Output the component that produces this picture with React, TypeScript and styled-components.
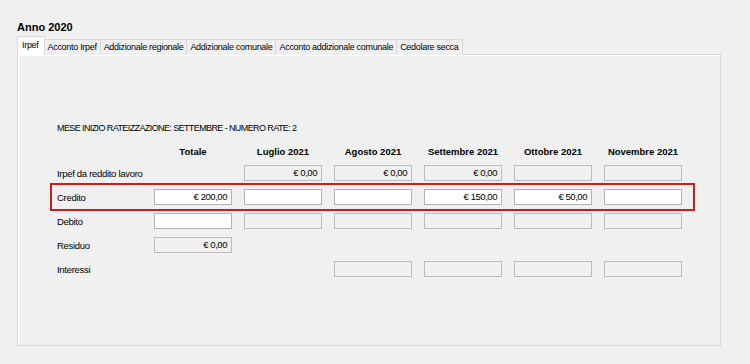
import styled, { createGlobalStyle } from 'styled-components';

const GlobalStyle = createGlobalStyle`
    html, body {
        margin: 0;
        padding: 0;
        background: #f0f0f0;
    }
    body {
        font-family: "Liberation Sans", Arial, sans-serif;
        font-size: 11px;
        color: #000;
    }
`;

const Page = styled.div`
    width: 750px;
    height: 364px;
    padding: 20px 0 0 17px;
    box-sizing: border-box;
`;

const Title = styled.div`
    font-weight: bold;
    font-size: 11px;
    height: 17px;
    line-height: 14px;
`;

const TabBar = styled.div`
    display: flex;
    align-items: flex-end;
    height: 18px;
`;

const Tab = styled.div<{ $active?: boolean }>`
    height: ${p => (p.$active ? '18px' : '15px')};
    line-height: ${p => (p.$active ? '16px' : '14px')};
    padding: 0 ${p => (p.$active ? '5px' : '3px')} 0 ${p => (p.$active ? '4px' : '3px')};
    background: ${p => (p.$active ? '#ffffff' : '#f0f0f0')};
    border: 1px solid #d9d9d9;
    border-bottom: none;
    margin-left: -1px;
    font-size: 9px;
    letter-spacing: -0.3px;
    white-space: nowrap;
    &:first-child {
        margin-left: 0;
    }
    position: relative;
    z-index: ${p => (p.$active ? 2 : 1)};
`;

const Panel = styled.div`
    width: 704px;
    height: 292px;
    box-sizing: border-box;
    border: 1px solid #d9d9d9;
    box-shadow: inset 0 1px 0 #ffffff, inset 1px 0 0 #ffffff;
    margin-top: -1px;
    padding: 68px 0 0 39px;
    position: relative;
`;

const Info = styled.div`
    font-size: 9px;
    height: 20px;
    letter-spacing: -0.6px;
`;

const Row = styled.div<{ $highlight?: boolean }>`
    display: grid;
    grid-template-columns: 85px repeat(6, 78px);
    column-gap: 12px;
    align-items: center;
    height: 16px;
    margin-bottom: 8px;
    ${p =>
        p.$highlight &&
        `
        border: 2px solid #cc1c1c;
        margin: -6px 0 2px -7px;
        padding: 4px 11px 4px 5px;
        width: fit-content;
    `}
`;

const HeaderRow = styled(Row)`
    margin-bottom: 6px;
`;

const Label = styled.div`
    font-size: 9.5px;
    letter-spacing: -0.3px;
    white-space: nowrap;
`;

const Head = styled.div`
    font-weight: bold;
    font-size: 9.5px;
    text-align: center;
`;

const Field = styled.div<{ $readonly?: boolean }>`
    height: 16px;
    box-sizing: border-box;
    border: 1px solid ${p => (p.$readonly ? '#bcbcbc' : '#b4b4b4')};
    background: ${p => (p.$readonly ? '#f0f0f0' : '#ffffff')};
    text-align: right;
    padding-right: 4px;
    line-height: 14px;
    font-size: 9.5px;
    letter-spacing: -0.45px;
`;

type Cell = null | { ro?: boolean; value?: string };

const months = ['Luglio 2021', 'Agosto 2021', 'Settembre 2021', 'Ottobre 2021', 'Novembre 2021'];

const rows: { label: string; cells: Cell[]; highlight?: boolean }[] = [
    {
        label: 'Irpef da reddito lavoro',
        cells: [null, { ro: true, value: '€ 0,00' }, { ro: true, value: '€ 0,00' }, { ro: true, value: '€ 0,00' }, { ro: true }, { ro: true }],
    },
    {
        label: 'Credito',
        highlight: true,
        cells: [{ value: '€ 200,00' }, {}, {}, { value: '€ 150,00' }, { value: '€ 50,00' }, {}],
    },
    {
        label: 'Debito',
        cells: [{}, { ro: true }, { ro: true }, { ro: true }, { ro: true }, { ro: true }],
    },
    {
        label: 'Residuo',
        cells: [{ ro: true, value: '€ 0,00' }, null, null, null, null, null],
    },
    {
        label: 'Interessi',
        cells: [null, null, { ro: true }, { ro: true }, { ro: true }, { ro: true }],
    },
];

const tabs = ['Irpef', 'Acconto Irpef', 'Addizionale regionale', 'Addizionale comunale', 'Acconto addizionale comunale', 'Cedolare secca'];

const App = () => {
    return (
        <Page>
            <GlobalStyle />
            <Title>Anno 2020</Title>
            <TabBar>
                {tabs.map((t, i) => (
                    <Tab key={t} $active={i === 0}>{t}</Tab>
                ))}
            </TabBar>
            <Panel>
                <Info>MESE INIZIO RATEIZZAZIONE: SETTEMBRE - NUMERO RATE: 2</Info>
                <HeaderRow>
                    <div />
                    <Head>Totale</Head>
                    {months.map(m => (
                        <Head key={m}>{m}</Head>
                    ))}
                </HeaderRow>
                {rows.map(r => (
                    <Row key={r.label} $highlight={r.highlight}>
                        <Label>{r.label}</Label>
                        {r.cells.map((c, i) =>
                            c ? <Field key={i} $readonly={c.ro}>{c.value}</Field> : <div key={i} />
                        )}
                    </Row>
                ))}
            </Panel>
        </Page>
    );
};

export default App;
